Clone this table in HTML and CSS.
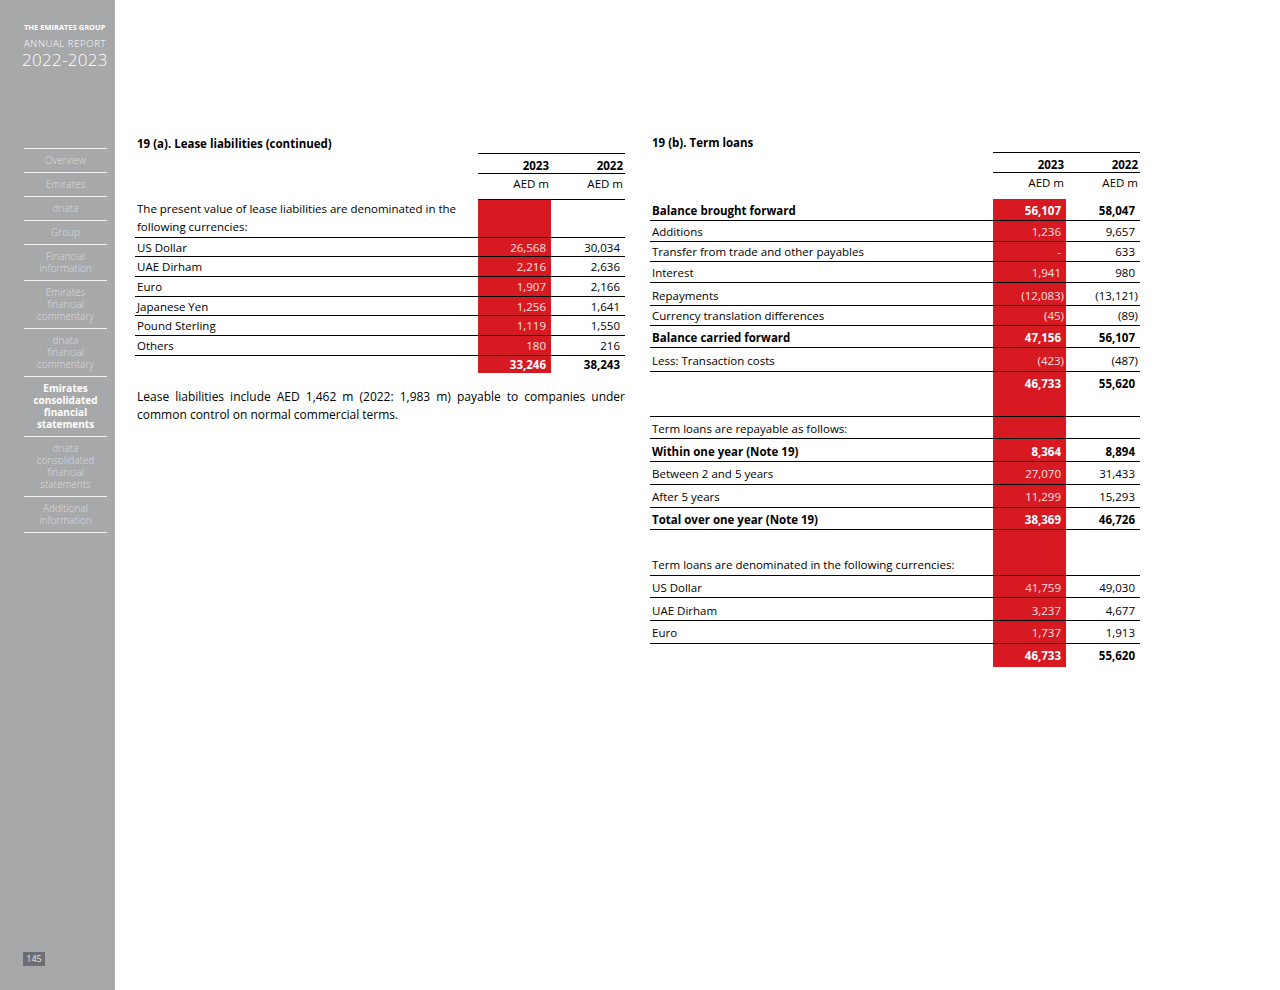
FILE: index.html
```html
<!DOCTYPE html>
<html>
<head>
<meta charset="utf-8">
<link rel="stylesheet" href="styles.css">
</head>
<body>
<div class="page">
  <aside class="sidebar">
    <div class="brand">
      <div class="brand-group">THE EMIRATES GROUP</div>
      <div class="brand-report">ANNUAL REPORT</div>
      <div class="brand-year">2022-2023</div>
    </div>
    <nav class="nav">
      <div class="nav-item">Overview</div>
      <div class="nav-item">Emirates</div>
      <div class="nav-item">dnata</div>
      <div class="nav-item">Group</div>
      <div class="nav-item">Financial<br>information</div>
      <div class="nav-item">Emirates<br>financial<br>commentary</div>
      <div class="nav-item">dnata<br>financial<br>commentary</div>
      <div class="nav-item active">Emirates<br>consolidated<br>financial<br>statements</div>
      <div class="nav-item">dnata<br>consolidated<br>financial<br>statements</div>
      <div class="nav-item">Additional<br>information</div>
    </nav>
    <div class="page-num">145</div>
  </aside>

  <main class="content">
    <section class="col col-left">
      <h2 class="title">19 (a). Lease liabilities (continued)</h2>
      <table class="fin">
        <colgroup><col><col class="c23"><col class="c22"></colgroup>
        <tr class="hd1"><td class="lbl nb"></td><td class="num top">2023</td><td class="num top">2022</td></tr>
        <tr class="hd2"><td class="lbl nb"></td><td class="num unit">AED m</td><td class="num unit">AED m</td></tr>
        <tr class="r-intro"><td class="lbl">The present value of lease liabilities are denominated in the following currencies:</td><td class="red"></td><td></td></tr>
        <tr class="r19"><td class="lbl">US Dollar</td><td class="red v">26,568</td><td class="v">30,034</td></tr>
        <tr class="r20"><td class="lbl">UAE Dirham</td><td class="red v">2,216</td><td class="v">2,636</td></tr>
        <tr class="r20"><td class="lbl">Euro</td><td class="red v">1,907</td><td class="v">2,166</td></tr>
        <tr class="r19"><td class="lbl">Japanese Yen</td><td class="red v">1,256</td><td class="v">1,641</td></tr>
        <tr class="r20"><td class="lbl">Pound Sterling</td><td class="red v">1,119</td><td class="v">1,550</td></tr>
        <tr class="r20"><td class="lbl">Others</td><td class="red v">180</td><td class="v">216</td></tr>
        <tr class="r17 last"><td class="lbl"></td><td class="red v b">33,246</td><td class="v b">38,243</td></tr>
      </table>
      <p class="note">Lease liabilities include AED 1,462 m (2022: 1,983 m) payable to companies under common control on normal commercial terms.</p>
    </section>

    <section class="col col-right">
      <h2 class="title">19 (b). Term loans</h2>
      <table class="fin">
        <colgroup><col><col class="c23"><col class="c22"></colgroup>
        <tr class="hd1"><td class="lbl nb"></td><td class="num top">2023</td><td class="num top">2022</td></tr>
        <tr class="hd2"><td class="lbl nb"></td><td class="num unit nb">AED m</td><td class="num unit nb">AED m</td></tr>
        <tr class="r22 lo"><td class="lbl b">Balance brought forward</td><td class="red v b">56,107</td><td class="v b">58,047</td></tr>
        <tr class="r21"><td class="lbl">Additions</td><td class="red v">1,236</td><td class="v">9,657</td></tr>
        <tr class="r20"><td class="lbl">Transfer from trade and other payables</td><td class="red v">-</td><td class="v">633</td></tr>
        <tr class="r21"><td class="lbl">Interest</td><td class="red v">1,941</td><td class="v">980</td></tr>
        <tr class="r23 lo"><td class="lbl">Repayments</td><td class="red v neg">(12,083)</td><td class="v neg">(13,121)</td></tr>
        <tr class="r20"><td class="lbl">Currency translation differences</td><td class="red v neg">(45)</td><td class="v neg">(89)</td></tr>
        <tr class="r22 lo"><td class="lbl b">Balance carried forward</td><td class="red v b">47,156</td><td class="v b">56,107</td></tr>
        <tr class="r24 lo"><td class="lbl">Less: Transaction costs</td><td class="red v neg">(423)</td><td class="v neg">(487)</td></tr>
        <tr class="r45"><td class="lbl"></td><td class="red v b">46,733</td><td class="v b">55,620</td></tr>
        <tr class="r22 lo"><td class="lbl">Term loans are repayable as follows:</td><td class="red"></td><td></td></tr>
        <tr class="r23 lo"><td class="lbl b">Within one year (Note 19)</td><td class="red v b">8,364</td><td class="v b">8,894</td></tr>
        <tr class="r23"><td class="lbl">Between 2 and 5 years</td><td class="red v">27,070</td><td class="v">31,433</td></tr>
        <tr class="r23"><td class="lbl">After 5 years</td><td class="red v">11,299</td><td class="v">15,293</td></tr>
        <tr class="r22 lo"><td class="lbl b">Total over one year (Note 19)</td><td class="red v b">38,369</td><td class="v b">46,726</td></tr>
        <tr class="r46"><td class="lbl">Term loans are denominated in the following currencies:</td><td class="red"></td><td></td></tr>
        <tr class="r22 lo"><td class="lbl">US Dollar</td><td class="red v">41,759</td><td class="v">49,030</td></tr>
        <tr class="r23 lo"><td class="lbl">UAE Dirham</td><td class="red v">3,237</td><td class="v">4,677</td></tr>
        <tr class="r23"><td class="lbl">Euro</td><td class="red v">1,737</td><td class="v">1,913</td></tr>
        <tr class="r23 last"><td class="lbl"></td><td class="red v b">46,733</td><td class="v b">55,620</td></tr>
      </table>
    </section>
  </main>
</div>
</body>
</html>
```

FILE: styles.css
```css
* { box-sizing: border-box; }
html, body { margin: 0; padding: 0; }
body {
  background: #fff;
  font-family: "Open Sans", "Noto Sans", "Liberation Sans", sans-serif;
  color: #000;
}
.page {
  display: flex;
  width: 1280px;
  height: 990px;
}
.sidebar {
  width: 115px;
  flex: none;
  background: #a7a8aa;
  display: flex;
  flex-direction: column;
  padding: 22px 6px 0 24px;
  position: relative;
}
.brand { color: #fff; }
.brand-group {
  font-size: 7.5px;
  font-weight: 700;
  line-height: 10px;
  white-space: nowrap;
}
.brand-report {
  font-size: 9.6px;
  font-weight: 300;
  letter-spacing: 0.6px;
  line-height: 12px;
  margin-top: 6px;
  white-space: nowrap;
}
.brand-year {
  font-size: 17px;
  font-weight: 300;
  line-height: 17px;
  letter-spacing: 0.3px;
  margin-left: -2px;
  margin-top: 1px;
  white-space: nowrap;
}
.nav {
  margin-top: 80px;
  width: 83px;
  border-top: 1px solid #f2f2f2;
}
.nav-item {
  border-bottom: 1px solid #f2f2f2;
  padding: 5px 0 6px;
  line-height: 12px;
  font-size: 10px;
  font-weight: 300;
  color: #dcdddf;
  text-align: center;
}
.nav-item.active {
  color: #fff;
  font-weight: 700;
}
.page-num {
  position: absolute;
  left: 23px;
  top: 952px;
  width: 22px;
  height: 14px;
  background: #6d6e71;
  color: #e6e6e6;
  font-size: 9px;
  line-height: 14px;
  text-align: center;
}

.content {
  flex: 1;
  display: flex;
  padding: 136px 0 0 20px;
  gap: 25px;
}
.col { width: 490px; flex: none; }
.title {
  font-size: 11.5px;
  font-weight: 700;
  margin: 0 0 2px 2px;
  line-height: 15px;
}
.col-right .title { margin-top: -1px; }

.fin {
  width: 490px;
  border-collapse: collapse;
  font-size: 11.5px;
  line-height: 15px;
}
.c23 { width: 73px; }
.c22 { width: 74px; }
.fin td {
  padding: 0;
  border-bottom: 1px solid #000;
  vertical-align: middle;
}
.fin td.nb { border-bottom: none; }
.fin tr.last td { border-bottom: none; }
.lbl { padding-left: 2px !important; }
.fin .num {
  text-align: right;
  padding-right: 2px;
  font-weight: 700;
}
.fin .top { border-top: 1px solid #000; }
.fin .unit { font-weight: 400; }
.hd1 td { height: 20px; vertical-align: bottom; }
.hd2 td { height: 26px; vertical-align: top; padding-top: 2px; }
.red { background: #d71a21; color: #fbe1e1; }
.v { text-align: right; padding-right: 5px !important; }
.v.neg { padding-right: 2px !important; }
.b { font-weight: 700; }
.red.b { color: #fff; }

.r-intro td { height: 38px; vertical-align: top; }
.r-intro .lbl { padding-right: 12px !important; line-height: 18px; }
.r17 td { height: 17px; }
.r19 td { height: 19px; }
.r20 td { height: 20px; }
.r21 td { height: 21px; }
.r22 td { height: 22px; }
.r23 td { height: 23px; }
.r24 td { height: 24px; }
.lo td { padding-top: 2px; }
.r45 td { height: 45px; vertical-align: top; padding-top: 4px; }
.r46 td { height: 46px; vertical-align: bottom; padding-bottom: 3px; }

.note {
  margin: 15px 0 0 2px;
  font-size: 12px;
  line-height: 18px;
  text-align: justify;
}
```
